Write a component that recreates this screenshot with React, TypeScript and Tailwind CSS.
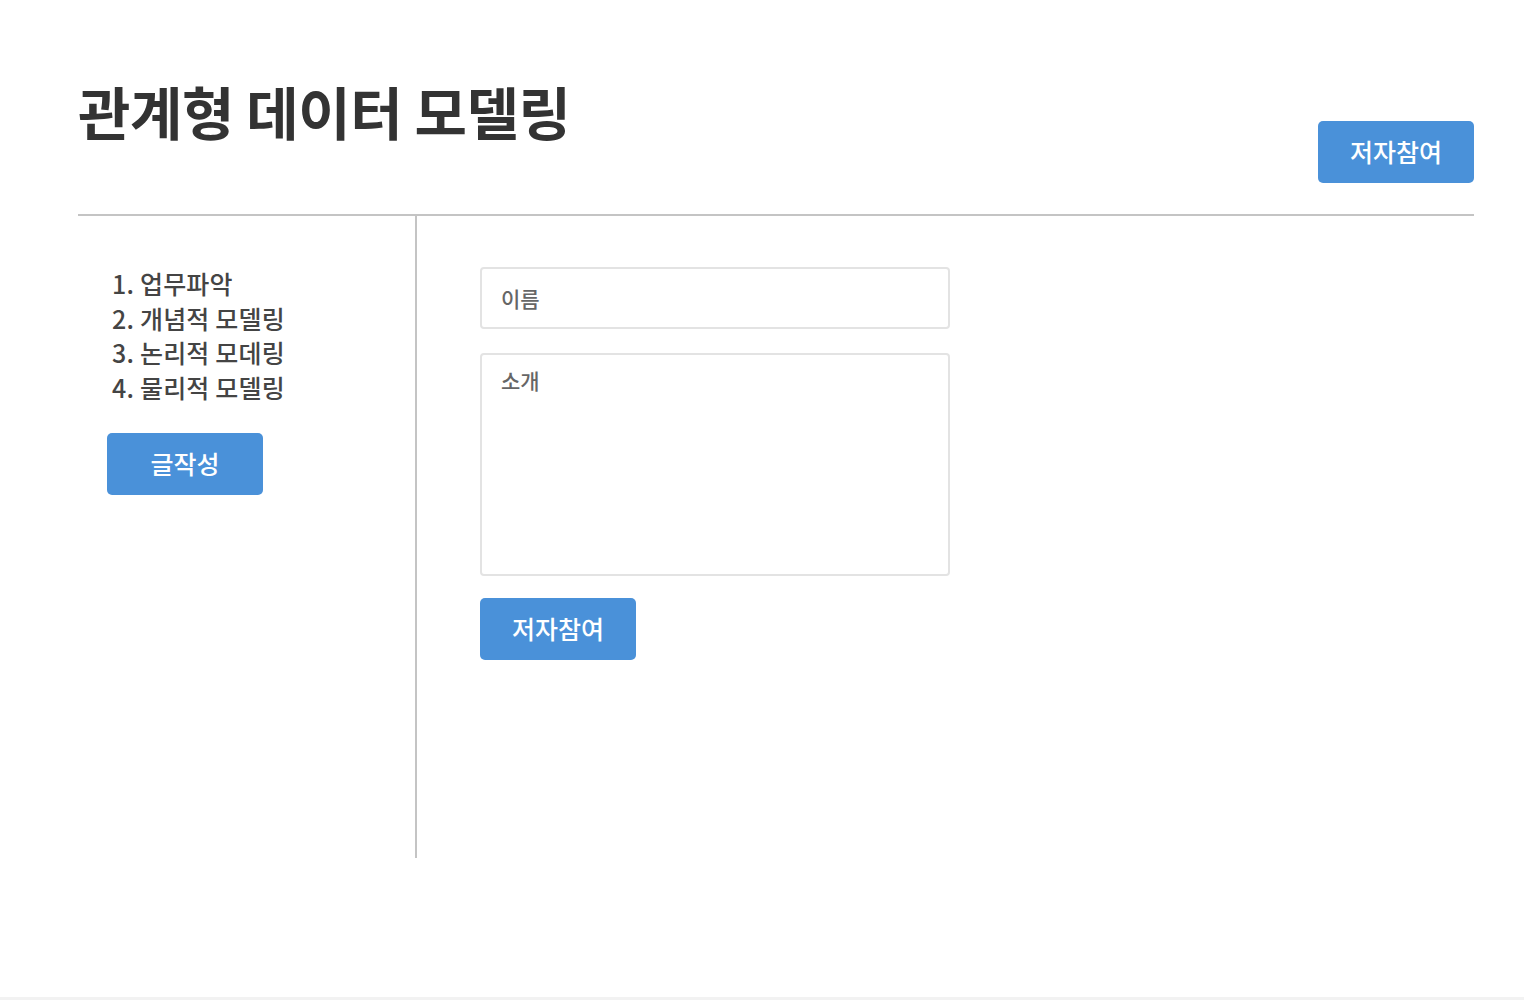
import { useState } from "react";

const font = {
  fontFamily: '"Noto Sans CJK KR", "Noto Sans", sans-serif',
};

const steps = ["업무파악", "개념적 모델링", "논리적 모데링", "물리적 모델링"];

export default function App() {
  const [name, setName] = useState("");
  const [intro, setIntro] = useState("");

  return (
    <div className="min-h-[1000px] bg-white flex flex-col text-[#333]" style={font}>
      <div className="pl-[78px] pr-[50px] pt-[70px] flex-1">
        {/* Header */}
        <div className="flex items-start justify-between h-[146px] border-b-2 border-[#c4c4c4]">
          <h1 className="text-[57px] font-bold leading-none mt-[12px] tracking-[-0.5px]">
            관계형 데이터 모델링
          </h1>
          <button className="mt-[51px] w-[156px] h-[62px] rounded-[5px] bg-[#4a91d9] text-white text-[25px] font-medium">
            저자참여
          </button>
        </div>

        {/* Body */}
        <div className="flex">
          <aside className="w-[339px] h-[642px] border-r-2 border-[#c4c4c4] pt-[50px] pl-[29px]">
            <ol className="pl-[5px] text-[25px] font-medium leading-[34.5px] text-[#444] tracking-[0.2px]">
              {steps.map((s, i) => (
                <li key={i}>
                  {i + 1}.&nbsp;{s}
                </li>
              ))}
            </ol>
            <button className="mt-[29px] w-[156px] h-[62px] rounded-[5px] bg-[#4a91d9] text-white text-[25px] font-medium">
              글작성
            </button>
          </aside>

          <main className="pl-[63px] pt-[51px] flex flex-col">
            <input
              value={name}
              onChange={(e) => setName(e.target.value)}
              placeholder="이름"
              className="w-[470px] h-[62px] border-2 border-[#e3e3e3] rounded-[4px] px-[19px] text-[21px] font-medium placeholder:text-[#666] outline-none"
            />
            <textarea
              value={intro}
              onChange={(e) => setIntro(e.target.value)}
              placeholder="소개"
              className="mt-[24px] w-[470px] h-[223px] border-2 border-[#e3e3e3] rounded-[4px] px-[19px] py-[10px] text-[21px] font-medium placeholder:text-[#666] outline-none resize-none"
            />
            <button className="mt-[22px] w-[156px] h-[62px] rounded-[5px] bg-[#4a91d9] text-white text-[25px] font-medium">
              저자참여
            </button>
          </main>
        </div>
      </div>
      <div className="h-[3px] bg-[#f2f2f2]" />
    </div>
  );
}
